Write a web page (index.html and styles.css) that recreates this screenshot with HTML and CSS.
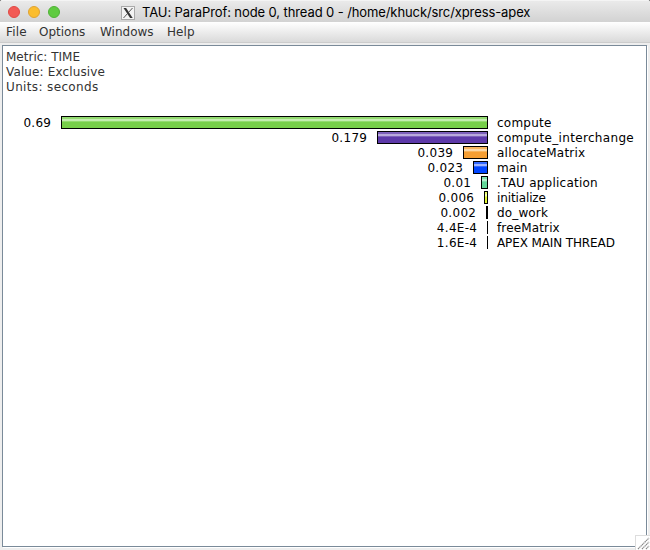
FILE: index.html
```
<!DOCTYPE html>
<html lang="en">
<head>
<meta charset="utf-8">
<title>TAU: ParaProf</title>
<link rel="stylesheet" href="styles.css">
</head>
<body>
<div class="window">
  <header class="titlebar">
    <div class="lights"><i class="light red"></i><i class="light amber"></i><i class="light green"></i></div>
    <svg class="xicon" width="14" height="14" viewBox="0 0 14 14"><rect x=".5" y=".5" width="13" height="13" fill="#f3f3f3" stroke="#aaa"/><path d="M2.500 2h2.600l6.600 10H9.100z" fill="#333"/><path d="M11.500 2L2.500 12" stroke="#444" stroke-width=".9"/></svg>
    <span class="title">TAU: ParaProf: node 0, thread 0 - /home/khuck/src/xpress-apex</span>
  </header>
  <nav class="menu"><span class="m-file">File</span><span class="m-options">Options</span><span class="m-windows">Windows</span><span class="m-help">Help</span></nav>
  <main class="panel">
    <div class="meta"><div class="t-metric">Metric: TIME</div><div class="t-value">Value: Exclusive</div><div class="t-units">Units: seconds</div></div>
    <div class="chart">
      <div class="row"><div class="left"><span class="num">0.69</span><i class="bar lime" style="width:427px"></i></div><span class="label wide">compute</span></div>
      <div class="row"><div class="left"><span class="num">0.179</span><i class="bar purple" style="width:111px"></i></div><span class="label wider">compute_interchange</span></div>
      <div class="row"><div class="left"><span class="num">0.039</span><i class="bar orange" style="width:25px"></i></div><span class="label wide">allocateMatrix</span></div>
      <div class="row"><div class="left"><span class="num">0.023</span><i class="bar blue" style="width:15px"></i></div><span class="label">main</span></div>
      <div class="row"><div class="left"><span class="num">0.01</span><i class="bar mint" style="width:7px"></i></div><span class="label wide">.TAU application</span></div>
      <div class="row"><div class="left"><span class="num">0.006</span><i class="bar yellow" style="width:4px"></i></div><span class="label tight">initialize</span></div>
      <div class="row"><div class="left"><span class="num">0.002</span><i class="bar thin" style="width:2px"></i></div><span class="label">do_work</span></div>
      <div class="row"><div class="left"><span class="num">4.4E-4</span><i class="bar thin" style="width:1px"></i></div><span class="label">freeMatrix</span></div>
      <div class="row"><div class="left"><span class="num">1.6E-4</span><i class="bar thin" style="width:1px"></i></div><span class="label tight">APEX MAIN THREAD</span></div>
    </div>
  </main>
  <svg class="grip" width="15" height="15" viewBox="0 0 15 15"><path d="M0 0h15v15H0z" fill="#fff"/><path d="M0 .5h15M.5 0v15" fill="none" stroke="#ddd"/><path d="M3 14L14 3M7 14l7-7M11 14l3-3" stroke="#888" stroke-width="1.200" stroke-dasharray="1.400 .5"/></svg>
</div>
</body>
</html>
```
FILE: styles.css
```
* { box-sizing: border-box; }
body { margin: 0; background: #000; }
.window {
  position: relative; width: 650px; height: 550px; overflow: hidden;
  display: flex; flex-direction: column;
  background: #eee; border-radius: 2px 2px 0 0;
  font: 12px/15px "DejaVu Sans", sans-serif; color: #000;
}
.titlebar {
  height: 22px; flex: none; display: flex; align-items: center;
  background: linear-gradient(#eaeaea, #d2d2d2);
  border-top: 1px solid #f4f4f4;
}
.lights { display: flex; gap: 8px; padding-left: 8px; width: 121px; }
.light { width: 12px; height: 12px; border-radius: 50%; border: 1px solid; }
.red { background: #f25a55; border-color: #e04a45; }
.amber { background: #fbbd2e; border-color: #e0a333; }
.green { background: #5fcb40; border-color: #4fb236; }
.xicon { flex: none; margin-top: 2px; }
.title { font: 13px/20px Inter, sans-serif; letter-spacing: -.1px; margin-left: 7px; white-space: nowrap; }
.menu {
  height: 21px; flex: none; display: flex; padding: 3px 0 0 6px;
  background: linear-gradient(#fff, #dadada);
  border-bottom: 1px solid #ccc; color: #333;
}
.menu span { white-space: nowrap; }
.m-file { width: 33px; letter-spacing: .2px; }
.m-options { width: 61px; }
.m-windows { width: 67px; }
.m-help { letter-spacing: .1px; }
.panel {
  margin: 2px 3px 3px 2px; flex: 1; background: #fff;
  border: 1px solid #7a8a99; box-shadow: 1px 1px #fff;
}
.meta { padding: 4px 0 0 3px; color: #333; }
.t-value { letter-spacing: .13px; }
.t-units { letter-spacing: .36px; }
.chart { padding-top: 20px; }
.row { display: flex; height: 15px; align-items: flex-start; white-space: nowrap; }
.left { width: 485px; display: flex; justify-content: flex-end; gap: 10px; }
.num { padding-top: 1px; letter-spacing: .3px; margin-right: -.3px; }
.label { margin-left: 9px; padding-top: 1px; letter-spacing: .14px; }
.label.wide { letter-spacing: .23px; }
.label.wider { letter-spacing: .33px; }
.label.tight { letter-spacing: -.12px; }
.bar {
  height: 13px; margin-top: 1px; border: 1px solid #000;
  background: linear-gradient(var(--a) 0 2px, var(--b) 2px 4px, var(--a) 4px 5px, var(--c) 5px);
}
.lime { --a: #93db70; --b: #c5edb1; --c: #77cf4a; }
.purple { --a: #7d60bb; --b: #b9a9dc; --c: #5d39a9; }
.orange { --a: #f7b45e; --b: #fcd8a8; --c: #f59e33; }
.blue { --a: #3369ff; --b: #a0b5ff; --c: #0045ff; }
.mint { --a: #7ee0ad; --b: #b4f0d0; --c: #63d799; }
.yellow { --a: #eaff64; --b: #f4ffb0; --c: #e0f532; }
.thin { border: 0; background: #000; }
.grip { position: absolute; right: 0; bottom: 0; }
```
